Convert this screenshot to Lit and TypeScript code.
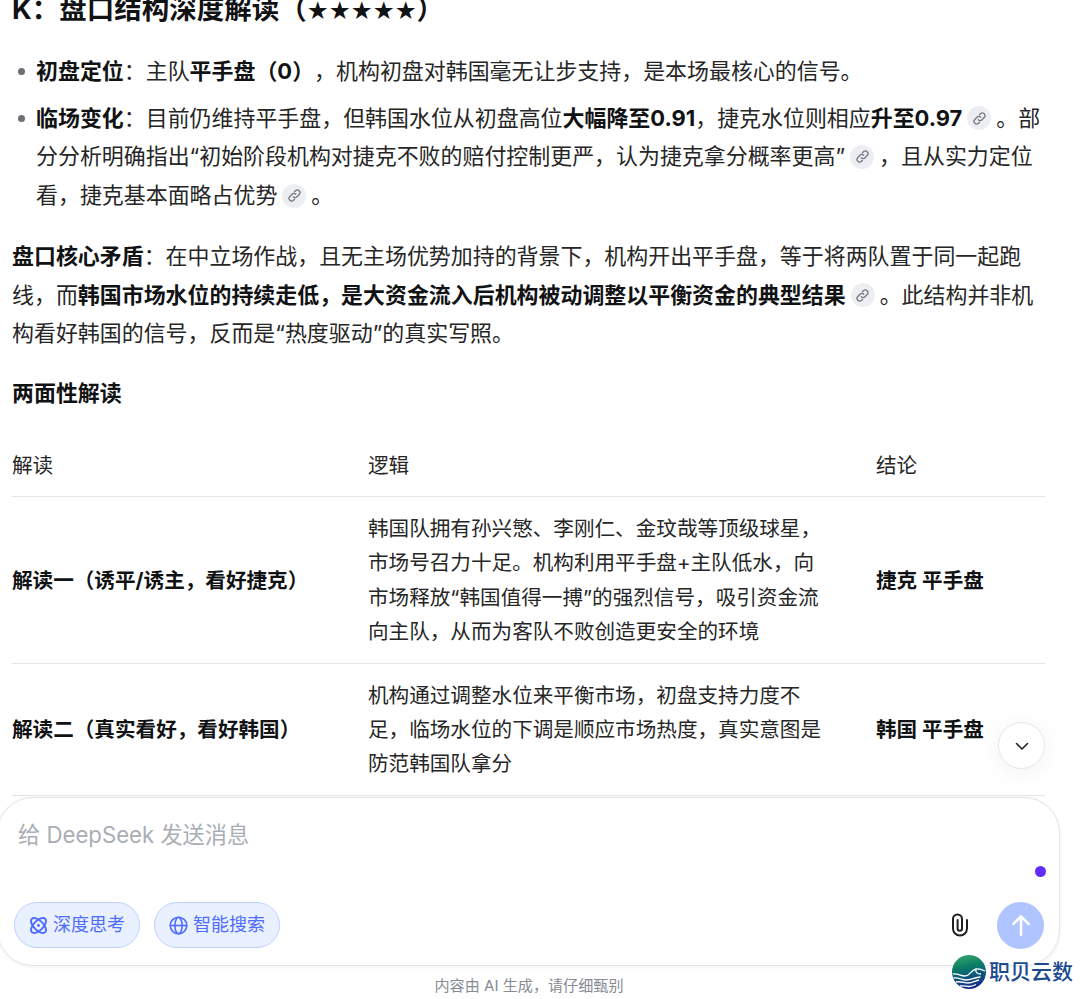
import { LitElement, css, html } from 'lit';
import { customElement } from 'lit/decorators.js';

const chip = html`<span class="chip"><svg viewBox="0 0 24 24" width="15" height="15" fill="none" stroke="#73777f" stroke-width="2" stroke-linecap="round"><path d="M10 14a4.2 4.2 0 0 0 6 0l3.5-3.5a4.2 4.2 0 0 0-6-6L12 6"/><path d="M14 10a4.2 4.2 0 0 0-6 0l-3.5 3.5a4.2 4.2 0 0 0 6 6L12 18"/></svg></span>`;

@customElement('app-root')
export class AppRoot extends LitElement {
    static styles = css`
        :host{
            display: block;
            position: relative;
            height: 999px;
            overflow: hidden;
            background: white;
            color: #262626;
            font-family: Inter, "Noto Sans CJK SC", sans-serif;
            font-size: 21.95px;
            line-height: 38.7px;
            text-spacing-trim: space-all;
        }

        b{
            color: #111214;
            font-weight: 700;
        }

        .content{
            margin-top: -10px;
            padding: 0 35px 0 12px;
        }

        h3{
            margin: 0 0 22px;
            font-size: 27.5px;
            line-height: 39px;
            font-weight: 700;
            color: #111214;
        }

        .stars{
            font-family: "DejaVu Sans", sans-serif;
            font-size: 24.5px;
        }

        ul{
            margin: 0 0 22px;
            padding: 0;
            list-style: none;
        }

        li{
            position: relative;
            margin-bottom: 8px;
            padding-left: 24px;
        }
        li:last-child{
            margin-bottom: 0;
        }
        li::before{
            content: "";
            position: absolute;
            left: 6px;
            top: 16px;
            width: 7px;
            height: 7px;
            border-radius: 50%;
            background: #6b6f76;
        }

        p{
            margin: 0 0 21px;
        }

        .chip{
            display: inline-flex;
            align-items: center;
            justify-content: center;
            width: 24px;
            height: 24px;
            margin: 0 5px;
            border-radius: 50%;
            background: #eceef2;
            vertical-align: 0;
        }

        table{
            width: 1033px;
            margin-top: 36px;
            border-collapse: collapse;
            table-layout: fixed;
            font-size: 20.6px;
            line-height: 34.4px;
        }
        th, td{
            padding: 15px 0 13px;
            border-bottom: 1px solid #e5e5e5;
            text-align: left;
            font-weight: 400;
            vertical-align: middle;
        }
        th{
            padding: 0 0 13px;
        }
        td:nth-child(2){
            padding-right: 48px;
        }
        .c1{ width: 356px; }
        .c2{ width: 508px; }

        .composer{
            position: relative;
            display: flex;
            flex-direction: column;
            box-sizing: border-box;
            height: 169px;
            margin: 1px 20px 0 -3px;
            padding: 18px 15px 16px 16px;
            border: 1px solid #e4e4e6;
            border-radius: 36px;
            background: white;
            box-shadow: 0 1px 4px rgb(0 0 0 / 0.06);
        }

        .placeholder{
            padding-left: 4px;
            font-size: 22.2px;
            color: #a9adb4;
        }

        .tools{
            display: flex;
            align-items: center;
            gap: 14px;
            margin-top: auto;
        }

        .pill{
            display: flex;
            align-items: center;
            gap: 5px;
            box-sizing: border-box;
            width: 126px;
            height: 46px;
            padding-left: 14px;
            border: 1px solid #bfd0ff;
            border-radius: 23px;
            background: #e9f0ff;
            color: #4d6bfe;
            font-size: 18px;
            line-height: 1;
        }

        .clip{
            display: flex;
            margin-left: auto;
            margin-right: 14px;
        }

        .send{
            display: flex;
            align-items: center;
            justify-content: center;
            width: 47px;
            height: 47px;
            border-radius: 50%;
            background: #b0c4ff;
        }

        .dot{
            position: absolute;
            right: 13px;
            top: 68px;
            width: 11px;
            height: 11px;
            border-radius: 50%;
            background: #5f2cff;
        }

        .down{
            position: absolute;
            left: 998px;
            top: 722px;
            display: flex;
            align-items: center;
            justify-content: center;
            box-sizing: border-box;
            width: 47px;
            height: 47px;
            border: 1px solid #e6e6e6;
            border-radius: 50%;
            background: white;
            box-shadow: 0 4px 24px rgb(0 0 0 / 0.06);
        }

        .note{
            margin: 8px 0 0;
            text-align: center;
            font-size: 15.1px;
            line-height: 24px;
            color: #878b93;
            padding-right: 22px;
        }

        .brand{
            position: absolute;
            left: 952px;
            top: 955px;
            display: flex;
            align-items: center;
            gap: 3px;
            color: #1a4a8f;
            font-size: 21px;
            font-weight: 500;
            line-height: 34px;
        }
    `;

    render() {
        return html`
            <div class="content">
                <h3>K：盘口结构深度解读（<span class="stars">★★★★★</span>）</h3>
                <ul>
                    <li><b>初盘定位</b>：主队<b>平手盘（0）</b>，机构初盘对韩国毫无让步支持，是本场最核心的信号。</li>
                    <li><b>临场变化</b>：目前仍维持平手盘，但韩国水位从初盘高位<b>大幅降至0.91</b>，捷克水位则相应<b>升至0.97</b>${chip}。部分分析明确指出“初始阶段机构对捷克不败的赔付控制更严，认为捷克拿分概率更高”${chip}，且从实力定位看，捷克基本面略占优势${chip}。</li>
                </ul>
                <p><b>盘口核心矛盾</b>：在中立场作战，且无主场优势加持的背景下，机构开出平手盘，等于将两队置于同一起跑线，而<b>韩国市场水位的持续走低，是大资金流入后机构被动调整以平衡资金的典型结果</b>${chip}。此结构并非机构看好韩国的信号，反而是“热度驱动”的真实写照。</p>
                <p><b>两面性解读</b></p>
                <table>
                    <colgroup><col class="c1"><col class="c2"><col></colgroup>
                    <thead><tr><th>解读</th><th>逻辑</th><th>结论</th></tr></thead>
                    <tbody>
                        <tr>
                            <td><b>解读一（诱平/诱主，看好捷克）</b></td>
                            <td>韩国队拥有孙兴慜、李刚仁、金玟哉等顶级球星，市场号召力十足。机构利用平手盘+主队低水，向市场释放“韩国值得一搏”的强烈信号，吸引资金流向主队，从而为客队不败创造更安全的环境</td>
                            <td><b>捷克 平手盘</b></td>
                        </tr>
                        <tr>
                            <td><b>解读二（真实看好，看好韩国）</b></td>
                            <td>机构通过调整水位来平衡市场，初盘支持力度不足，临场水位的下调是顺应市场热度，真实意图是防范韩国队拿分</td>
                            <td><b>韩国 平手盘</b></td>
                        </tr>
                    </tbody>
                </table>
            </div>

            <div class="composer">
                <div class="placeholder">给 DeepSeek 发送消息</div>
                <span class="dot"></span>
                <div class="tools">
                    <div class="pill">
                        <svg viewBox="0 0 24 24" width="19" height="19" fill="none" stroke="currentColor" stroke-width="2.300"><ellipse cx="12" cy="12" rx="12" ry="6" transform="rotate(45 12 12)"/><ellipse cx="12" cy="12" rx="12" ry="6" transform="rotate(-45 12 12)"/><circle cx="12" cy="12" r="1.800" fill="currentColor" stroke="none"/></svg>
                        <span>深度思考</span>
                    </div>
                    <div class="pill">
                        <svg viewBox="0 0 24 24" width="19" height="19" fill="none" stroke="currentColor" stroke-width="2"><circle cx="12" cy="12" r="10.500"/><ellipse cx="12" cy="12" rx="4.500" ry="10.500"/><path d="M1.500 12h21"/></svg>
                        <span>智能搜索</span>
                    </div>
                    <span class="clip">
                        <svg viewBox="0 0 18 24" width="18" height="24" fill="none" stroke="#1f2023" stroke-width="2" stroke-linecap="round"><path d="M16 7v8.500a7 7 0 0 1-14 0V6a4.500 4.500 0 0 1 9 0v9.500a2.200 2.200 0 0 1-4.400 0V7"/></svg>
                    </span>
                    <span class="send">
                        <svg viewBox="0 0 24 24" width="26" height="26" fill="none" stroke="white" stroke-width="2.400" stroke-linecap="round" stroke-linejoin="round"><path d="M12 21V4M5 11l7-7 7 7"/></svg>
                    </span>
                </div>
            </div>
            <div class="note">内容由 AI 生成，请仔细甄别</div>

            <span class="down">
                <svg viewBox="0 0 16 16" width="16" height="16" fill="none" stroke="#222" stroke-width="1.600" stroke-linecap="round" stroke-linejoin="round"><path d="M2.500 5.500 8 11l5.500-5.500"/></svg>
            </span>

            <div class="brand">
                <svg viewBox="0 0 34 34" width="34" height="34">
                    <defs>
                        <linearGradient id="globe" x1="0.2" y1="0" x2="0.4" y2="1">
                            <stop offset="0" stop-color="#3aa874"/>
                            <stop offset="0.35" stop-color="#0b8062"/>
                            <stop offset="0.6" stop-color="#0b5f78"/>
                            <stop offset="1" stop-color="#16288c"/>
                        </linearGradient>
                    </defs>
                    <circle cx="17" cy="17" r="17" fill="url(#globe)"/>
                    <g fill="none" stroke="white" stroke-width="1.300">
                        <path d="M1 19c5-1 7 2 12 2 5 0 6-6 11-7 3-.5 6 .5 9 2"/>
                        <path d="M24 14c-1 3 1 5 5 5"/>
                        <path d="M1.500 23c5-1 8 2 13 2s8-3 14-3"/>
                        <path d="M4 27c5-1 8 1 12 1s7-2 11-3"/>
                        <path d="M8 31c4-.5 6 .5 9 .5s5-1 7-2"/>
                    </g>
                </svg>
                <span>职贝云数</span>
            </div>
            `;
    }
}
